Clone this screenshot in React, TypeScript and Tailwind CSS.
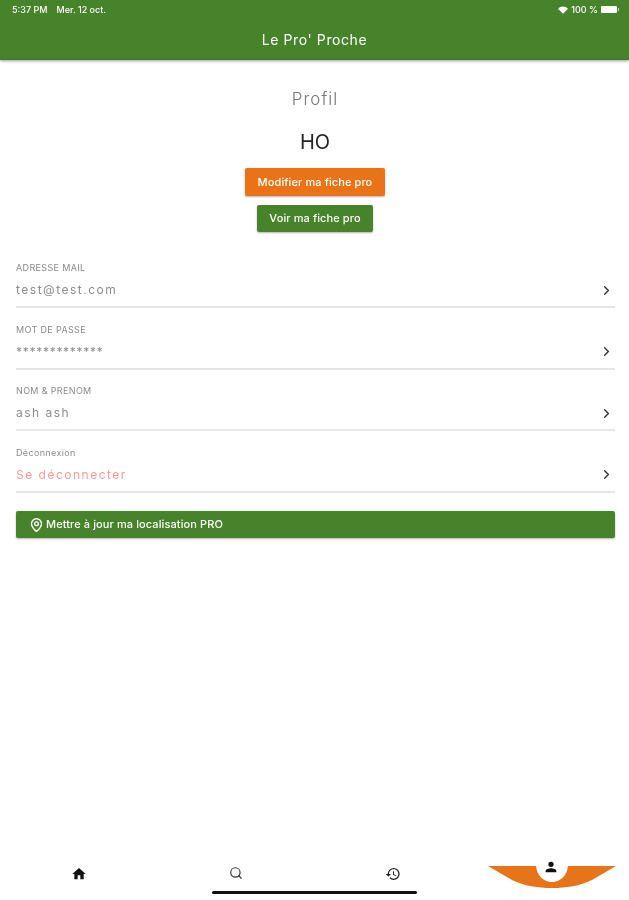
import { ChevronRight, MapPin, Search } from "lucide-react";

const FONT = "font-['Inter','Liberation_Sans',sans-serif]";

interface RowProps {
  label: string;
  value: string;
  danger?: boolean;
  masked?: boolean;
}

function ProfileRow({ label, value, danger, masked }: RowProps) {
  return (
    <div className="h-[61.5px] border-b-2 border-[#e6e6e6] flex flex-col pt-[14.5px]">
      <div className="h-[14px] text-[9px] leading-[14px] tracking-[0.35px] text-[#8a8a8a]">{label}</div>
      <div className="flex items-center justify-between h-[30px]">
        <span className={`text-[12px] ${masked ? "tracking-[0.72px]" : "tracking-[1.5px]"} ${danger ? "text-[#f39a9a]" : "text-[#8c8c8c]"}`}>
          {value}
        </span>
        <ChevronRight className="w-[15px] h-[15px] text-[#333] mr-[1px]" strokeWidth={2.2} />
      </div>
    </div>
  );
}

function TabIcon({ children }: { children: React.ReactNode }) {
  return <div className="flex justify-center pt-[28px]">{children}</div>;
}

export default function App() {
  return (
    <div className={`${FONT} w-[629px] h-[900px] bg-white flex flex-col overflow-hidden blur-[0.5px]`}>
      {/* app bar */}
      <header className="h-[60px] bg-[#47832a] text-white shadow-[0_1px_3px_rgba(0,0,0,0.4)] border-b border-[#3f7a22] shrink-0">
        <div className="flex justify-between items-center h-[19px] pl-[12px] pr-[10px] text-[9px] font-medium">
          <div className="flex gap-[9px]">
            <span>5:37 PM</span>
            <span>Mer. 12 oct.</span>
          </div>
          <div className="flex items-center gap-[3px]">
            <svg width="10" height="8" viewBox="0 0 24 18" fill="white">
              <path d="M12 18 0 6C7-1 17-1 24 6Z" />
            </svg>
            <span>100 %</span>
            <div className="w-[16px] h-[7px] bg-white rounded-[1px]" />
            <div className="w-[1px] h-[3px] bg-white/70 -ml-[2px]" />
          </div>
        </div>
        <div className="text-center text-[14px] leading-[20px] mt-[11px] tracking-[0.6px]">Le Pro' Proche</div>
      </header>

      <main className="flex-1 flex flex-col pl-[16px] pr-[14px]">
        <h1 className="text-center text-[17px] leading-[24px] mt-[27px] mr-[1px] text-[#777] tracking-[1px] font-light">Profil</h1>
        <div className="text-center text-[20px] leading-[26px] mt-[18px] mr-[1px] text-[#222]">HO</div>
        <div className="flex flex-col items-center mt-[13px] mr-[1px] gap-[9px]">
          <button className="w-[140px] h-[28px] bg-[#ea7317] text-white text-[11px] tracking-[0.1px] font-medium rounded-[2px] shadow-[0_1px_2px_rgba(0,0,0,0.3)]">
            Modifier ma fiche pro
          </button>
          <button className="w-[116px] h-[27px] bg-[#47832a] text-white text-[11px] tracking-[0.1px] font-medium rounded-[2px] shadow-[0_1px_2px_rgba(0,0,0,0.3)]">
            Voir ma fiche pro
          </button>
        </div>

        <div className="mt-[14.5px]">
          <ProfileRow label="ADRESSE MAIL" value="test@test.com" />
          <ProfileRow label="MOT DE PASSE" value="*************" masked />
          <ProfileRow label="NOM & PRENOM" value="ash ash" />
          <ProfileRow label="Déconnexion" value="Se déconnecter" danger />
        </div>

        <button className="mt-[18.5px] h-[27px] bg-[#47832a] text-white text-[11px] tracking-[0.1px] font-medium rounded-[2px] shadow-[0_1px_2px_rgba(0,0,0,0.3)] flex items-center pl-[14px] gap-[2px]">
          <MapPin className="w-[15px] h-[16px] -ml-[1px]" strokeWidth={2.2} />
          Mettre à jour ma localisation PRO
        </button>
      </main>

      {/* tab bar */}
      <nav className="relative h-[62px] grid grid-cols-4 shrink-0">
        <TabIcon>
          <svg width="16" height="16" viewBox="0 0 24 24" fill="#111">
            <path d="M10 20v-6h4v6h5v-8h3L12 3 2 12h3v8z" />
          </svg>
        </TabIcon>
        <TabIcon>
          <Search className="w-[14px] h-[14px] text-[#333]" strokeWidth={2} />
        </TabIcon>
        <TabIcon>
          <svg width="16" height="16" viewBox="0 0 24 24" fill="#222">
            <path d="M13 3a9 9 0 0 0-9 9H1l3.890 3.890.07.140L9 12H6c0-3.870 3.130-7 7-7s7 3.130 7 7-3.130 7-7 7c-1.930 0-3.680-.79-4.940-2.060l-1.420 1.420A8.954 8.954 0 0 0 13 21a9 9 0 0 0 0-18zm-1 5v5l4.280 2.540.72-1.210-3.500-2.080V8H12z" />
          </svg>
        </TabIcon>
        <div className="relative">
          <svg className="absolute left-[16px] top-[28px]" width="128" height="23" viewBox="0 0 128 23">
            <path d="M0 0H48C49 10 56 16 64 16S79 10 80 0H128L104 14C92 20 78 22 64 22S36 20 24 14Z" fill="#e8741a" />
          </svg>
          <svg className="absolute left-[71px] top-[21px]" width="16" height="16" viewBox="0 0 24 24" fill="#111">
            <path d="M12 12a4 4 0 1 0 0-8 4 4 0 0 0 0 8m0 2c-3 0-8 1.500-8 4v2h16v-2c0-2.500-5-4-8-4" />
          </svg>
        </div>
        <div className="absolute left-[212px] top-[53px] w-[205px] h-[3px] bg-[#111] rounded-full" />
      </nav>
    </div>
  );
}
